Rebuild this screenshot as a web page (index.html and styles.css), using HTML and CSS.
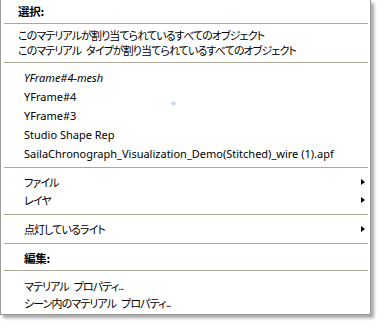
FILE: index.html
```html
<!DOCTYPE html>
<html lang="ja">
<head>
<meta charset="utf-8">
<link rel="stylesheet" href="styles.css">
</head>
<body>
<div class="menu">
  <div class="item head first">選択:</div>
  <div class="sep s1"></div>
  <div class="item tight">このマテリアルが割り当てられているすべてのオブジェクト</div>
  <div class="item tight">このマテリアル<span class="gap"> </span>タイプが割り当てられているすべてのオブジェクト</div>
  <div class="sep s2"></div>
  <div class="item obj"><i>YFrame#4-mesh</i></div>
  <div class="item obj">YFrame#4</div>
  <div class="item obj">YFrame#3</div>
  <div class="item obj">Studio Shape Rep</div>
  <div class="item obj">SailaChronograph_Visualization_Demo(Stitched)_wire (1).apf</div>
  <div class="sep s3"></div>
  <div class="item sub">ファイル<span class="arrow"></span></div>
  <div class="item sub">レイヤ<span class="arrow"></span></div>
  <div class="sep s4"></div>
  <div class="item sub">点灯しているライト<span class="arrow"></span></div>
  <div class="sep s5"></div>
  <div class="item sub head">編集:</div>
  <div class="sep s6"></div>
  <div class="item prop">マテリアル<span class="gap"> </span>プロパティ<span class="ell">...</span></div>
  <div class="item prop">シーン内のマテリアル<span class="gap"> </span>プロパティ<span class="ell">...</span></div>
  <span class="dot"></span>
</div>
</body>
</html>
```
FILE: styles.css
```css
html, body {
  margin: 0;
  padding: 0;
  background: #ffffff;
}
body {
  width: 390px;
  height: 331px;
  overflow: hidden;
}
.menu {
  position: relative;
  width: 371px;
  height: 315px;
  background: #ffffff;
  border-left: 1px solid #9a9a9a;
  border-right: 1px solid #9a9a9a;
  border-bottom: 1px solid #9a9a9a;
  box-shadow: 3px 3px 3px rgba(0, 0, 0, 0.35);
  display: flex;
  flex-direction: column;
  font-family: "Noto Sans CJK JP", "Noto Sans", sans-serif;
  font-feature-settings: "palt";
  font-size: 11px;
  letter-spacing: -0.9px;
  color: #000000;
  box-sizing: border-box;
}
.item {
  display: flex;
  align-items: center;
  padding-left: 17px;
  padding-right: 5px;
  white-space: pre;
  height: 18px;
}
.gap {
  display: inline-block;
  width: 5px;
}
.ell {
  letter-spacing: -1.2px;
  font-size: 10px;
}
.head {
  font-weight: bold;
  font-size: 11.5px;
  letter-spacing: -0.3px;
}
.first {
  height: 22px;
}
.tight {
  height: 15px;
}
.obj {
  height: 19px;
  padding-left: 23px;
  font-family: "Noto Sans", sans-serif;
  font-size: 11px;
  letter-spacing: 0;
}
.obj i {
  font-style: italic;
}
.sub {
  padding-left: 23px;
  height: 18px;
  justify-content: space-between;
}
.prop {
  padding-left: 23px;
  height: 17px;
}
.arrow {
  width: 0;
  height: 0;
  border-top: 3.5px solid transparent;
  border-bottom: 3.5px solid transparent;
  border-left: 4px solid #000000;
}
.sep {
  height: 1px;
  background: #aca899;
  margin-left: 3px;
  margin-right: 2px;
  flex: none;
}
.s1 { margin-top: 1px; margin-bottom: 3px; }
.s2 { margin-top: 5px; margin-bottom: 5px; }
.s3 { margin-top: 4px; margin-bottom: 5px; }
.s4 { margin-top: 5px; margin-bottom: 5px; }
.s5 { margin-top: 5px; margin-bottom: 5px; }
.s6 { margin-top: 3px; margin-bottom: 6px; }
.dot {
  position: absolute;
  left: 170px;
  top: 101px;
  width: 5px;
  height: 5px;
  border-radius: 50%;
  background: radial-gradient(circle, rgba(150, 180, 210, 0.7), rgba(200, 220, 235, 0));
}
```
